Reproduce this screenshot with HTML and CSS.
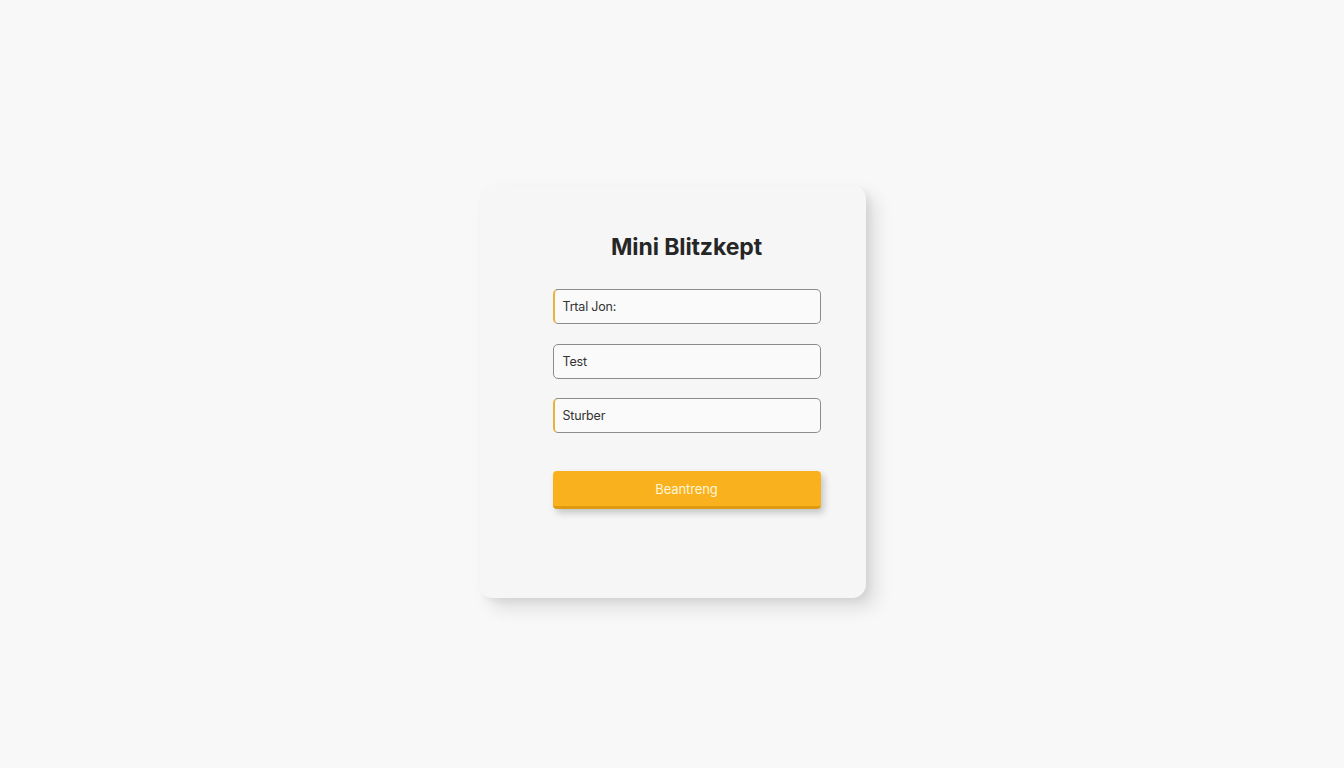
FILE: index.html
```html
<!DOCTYPE html>
<html lang="de">
<head>
<meta charset="utf-8">
<title>Mini Blitzkept</title>
<link rel="stylesheet" href="styles.css">
</head>
<body>
<main class="page">
  <form class="card">
    <h1 class="title">Mini Blitzkept</h1>
    <div class="fields">
      <div class="field accent">Trtal Jon:</div>
      <div class="field">Test</div>
      <div class="field accent">Sturber</div>
    </div>
    <button type="button" class="btn">Beantreng</button>
  </form>
</main>
</body>
</html>
```
FILE: styles.css
```css
html, body {
  margin: 0;
  padding: 0;
  height: 100%;
}
body {
  background: #f8f8f8;
  font-family: Inter, "Open Sans", "Liberation Sans", sans-serif;
}
.page {
  height: 768px;
  display: flex;
  justify-content: center;
  align-items: flex-start;
  box-sizing: border-box;
  padding-top: 185px;
}
.card {
  width: 386px;
  height: 413px;
  box-sizing: border-box;
  padding: 48px 45px 0 73px;
  background: #f6f6f6;
  border-radius: 12px 14px 14px 12px;
  box-shadow: 10px 10px 18px rgba(0,0,0,0.11), 4px 4px 6px rgba(0,0,0,0.05);
  display: flex;
  flex-direction: column;
  margin-left: 1px;
}
.title {
  margin: 0;
  height: 28px;
  line-height: 28px;
  font-size: 23px;
  font-weight: 700;
  color: #262626;
  text-align: center;
  letter-spacing: -0.1px;
}
.fields {
  margin-top: 28px;
  display: flex;
  flex-direction: column;
  gap: 19.5px;
}
.field {
  height: 35px;
  box-sizing: border-box;
  border: 1px solid #8c8c8c;
  border-radius: 5px;
  background: #fafafa;
  padding: 0 9px;
  display: flex;
  align-items: center;
  font-size: 12.5px;
  color: #333;
  letter-spacing: -0.2px;
}
.field.accent {
  border-left: 2px solid #e9b23a;
  padding-left: 8px;
}
.btn {
  margin-top: 38px;
  height: 38px;
  width: 100%;
  border: none;
  border-bottom: 3px solid #e09a12;
  border-radius: 4px;
  background: #f9b11d;
  color: #fff6d8;
  font-family: Inter, "Open Sans", "Liberation Sans", sans-serif;
  font-size: 13px;
  letter-spacing: -0.1px;
  box-shadow: 3px 4px 7px rgba(0,0,0,0.2);
  padding: 0;
}
```
